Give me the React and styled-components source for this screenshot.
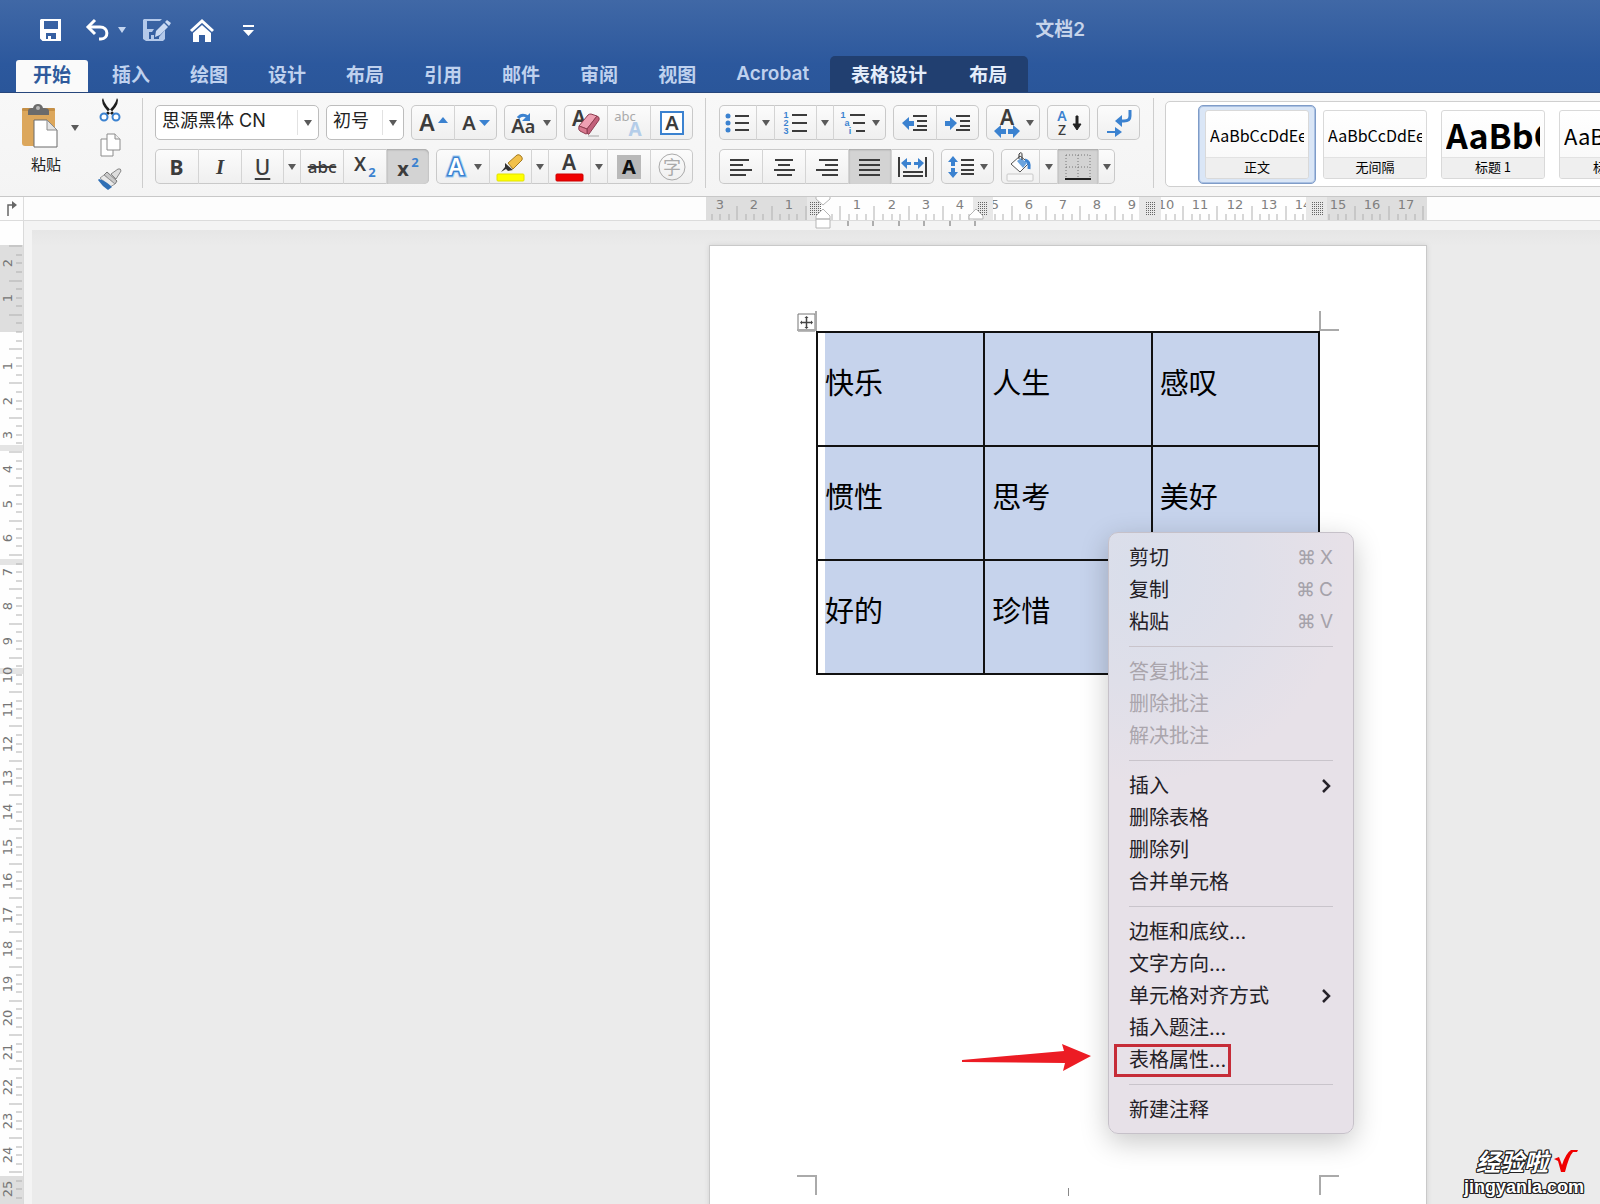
import styled, { createGlobalStyle, css } from "styled-components";

const uiFont = `Inter, "Noto Sans CJK SC", sans-serif`;
const docFont = `"Noto Sans CJK SC", "Noto Sans", sans-serif`;

const blue = "#3b82d0";
const ink = "#3c3c3c";

const tabs = ["插入", "绘图", "设计", "布局", "引用", "邮件", "审阅", "视图", "Acrobat"];

const cells = [
  ["快乐", "人生", "感叹"],
  ["惯性", "思考", "美好"],
  ["好的", "珍惜", ""],
];

const menuGroups = [
  [
    { label: "剪切", keys: "X" },
    { label: "复制", keys: "C" },
    { label: "粘贴", keys: "V" },
  ],
  [
    { label: "答复批注", disabled: true },
    { label: "删除批注", disabled: true },
    { label: "解决批注", disabled: true },
  ],
  [
    { label: "插入", sub: true },
    { label: "删除表格" },
    { label: "删除列" },
    { label: "合并单元格" },
  ],
  [
    { label: "边框和底纹..." },
    { label: "文字方向..." },
    { label: "单元格对齐方式", sub: true },
    { label: "插入题注..." },
    { label: "表格属性...", marked: true },
  ],
  [{ label: "新建注释" }],
];

/* icons */

const Caret = ({ color = "#5a5a5a" }) => (
  <svg width="8" height="6" viewBox="0 0 8 6">
    <path d="M0 0h8L4 6z" fill={color} />
  </svg>
);

const SaveIcon = () => (
  <svg width="22" height="22" viewBox="0 0 22 22">
    <path
      fill="#fff"
      fillRule="evenodd"
      d="M1 0h20v22H2.500L0 19.500V1zM4 2v8h14V2zM6 14v6h2v-3h3v3h5v-6z"
    />
  </svg>
);

const UndoIcon = () => (
  <svg width="23" height="22" viewBox="0 0 23 22" fill="none" stroke="#fff" strokeWidth="3">
    <path d="M9 1L2 8l7 7" />
    <path d="M2 8h12c9 0 9 12 1 12h-2" />
  </svg>
);

const SaveEditIcon = () => (
  <svg width="28" height="22" viewBox="0 0 28 22">
    <path
      fill="#b4c9ea"
      fillRule="evenodd"
      d="M1 0h18l-2 2H4v8h7l-2 3H6v7h2v-4h3v4h5v-2l6-7v9l-2 2H3l-3-2V1z"
    />
    <path fill="#c9d9f2" d="M13 12L21 4l4 4-8 8-5 2zM22 3l2-2 4 3-2 3z" />
  </svg>
);

const HomeIcon = () => (
  <svg width="24" height="23" viewBox="0 0 24 23">
    <path d="M1 12L12 2l11 10" fill="none" stroke="#fff" strokeWidth="3" />
    <path d="M3 14l9-8 9 8v9h-6v-7H9v7H3z" fill="#fff" />
  </svg>
);

const CustomizeIcon = () => (
  <svg width="11" height="11" viewBox="0 0 11 11" fill="#fff">
    <path d="M0 0h11v2H0zM0 5h11l-5.500 6z" />
  </svg>
);

const PasteIcon = () => (
  <svg width="36" height="45" viewBox="0 0 36 45">
    <rect x="0" y="5" width="33" height="38" rx="3" fill="#dca75c" />
    <rect x="0" y="5" width="33" height="3" rx="1" fill="#c58f45" />
    <path d="M6 12V8q0-3 4-3h1q1-4 5-4t5 4h1q5 0 5 3v4z" fill="#6b6b6b" />
    <circle cx="16" cy="5" r="2" fill="#b9b9b9" />
    <path d="M12 17h13l10 10v17H12z" fill="#fff" stroke="#6a6a6a" />
    <path d="M25 17v10h10z" fill="#e4e4e4" stroke="#8a8a8a" />
  </svg>
);

const CutIcon = () => (
  <svg width="22" height="24" viewBox="0 0 22 24">
    <path d="M4 0q2 8 11 15l-2 2Q3 9 3 2zM18 0q-2 8-11 15l2 2Q19 9 19 2z" fill="#1d1d1d" />
    <circle cx="5" cy="19" r="3.500" fill="#fff" stroke={blue} strokeWidth="2" />
    <circle cx="17" cy="19" r="3.500" fill="#fff" stroke={blue} strokeWidth="2" />
  </svg>
);

const CopyIcon = () => (
  <svg width="21" height="24" viewBox="0 0 21 24" fill="#fff" stroke="#8c8c8c">
    <path d="M1 6h8l4 4v13H1z" />
    <path d="M7 1h8l5 5v11H7z" />
    <path d="M15 1v5h5" fill="#eee" />
  </svg>
);

const BrushIcon = () => (
  <svg width="24" height="22" viewBox="0 0 24 22">
    <path d="M13 6l7-5q3-1 3 2l-5 8z" fill="#ddd" stroke="#888" />
    <path d="M9 4l10 9-2 3L6 7z" fill="#c9c9c9" stroke="#777" />
    <path d="M6 7l11 9-5 3L2 10z" fill="#e9e9e9" stroke="#999" />
    <path d="M1 11q7 2 13 8l-4 3Q4 18 0 12z" fill="#2f6fb5" />
  </svg>
);

/* a letter used as the drawing of a tool */
const T = ({ x, y, s = 22, fill = ink, w = 500, children, ...rest }) => (
  <text x={x} y={y} fontSize={s} fill={fill} fontWeight={w} textAnchor="middle" fontFamily="Noto Sans, sans-serif" {...rest}>
    {children}
  </text>
);

/* small list numbers */
const N = ({ x, y, children }) => (
  <text x={x} y={y} fontSize="9" fill={blue} fontWeight="700" textAnchor="middle" fontFamily="Liberation Sans, sans-serif">
    {children}
  </text>
);

const Draw = ({ w = 30, h = 30, children }) => (
  <svg width={w} height={h} viewBox={`0 0 ${w} ${h}`}>
    {children}
  </svg>
);

const GrowIcon = () => (
  <Draw w={34}>
    <T x={11} y={23} s={23} w={600}>A</T>
    <path d="M22 15l5-6 5 6z" fill={blue} />
  </Draw>
);
const ShrinkIcon = () => (
  <Draw w={34}>
    <T x={10} y={22} s={20} w={600}>A</T>
    <path d="M20 12h11l-5.500 6z" fill={blue} />
  </Draw>
);
const CaseIcon = () => (
  <Draw w={28}>
    <T x={8} y={25} s={20} w={600}>A</T>
    <T x={20} y={25} s={18} w={600}>a</T>
    <path d="M8 10q4-5 10-1" fill="none" stroke={blue} strokeWidth="3" />
    <path d="M20 5v8h-8z" fill={blue} />
  </Draw>
);
const EraserIcon = () => (
  <Draw w={32}>
    <T x={9} y={18} s={21} w={600}>A</T>
    <path d="M18 28h11" stroke="#ccc" strokeWidth="2" />
    <path d="M9 18L18 7q1-1 3-1l6 2-10 13z" fill="#eea0b2" stroke="#8e3d50" />
    <path d="M27 8q3 1 2 4L19 26q-1 1-2-1v-4z" fill="#c2607a" stroke="#8e3d50" />
    <path d="M9 18l8 3v4q0 1-1 1l-6-3q-2-1-1-5z" fill="#d9798f" stroke="#8e3d50" />
  </Draw>
);
const PhoneticIcon = () => (
  <Draw w={32}>
    <T x={12} y={13} s={13} w={400} fill="#aaa">abc</T>
    <T x={22} y={28} s={19} w={700} fill="#b4cde9">A</T>
  </Draw>
);
const BoxedAIcon = () => (
  <Draw w={24} h={24}>
    <rect x="1" y="1" width="22" height="22" fill="#fff" stroke={blue} strokeWidth="2" />
    <T x={12} y={19} s={20} w={600}>A</T>
  </Draw>
);
const SubIcon = () => (
  <Draw w={26}>
    <T x={8} y={19} s={19} w={600}>X</T>
    <T x={20} y={25} s={13} w={700} fill={blue}>2</T>
  </Draw>
);
const SupIcon = () => (
  <Draw w={26}>
    <T x={8} y={24} s={20} w={700}>x</T>
    <T x={20} y={15} s={13} w={700} fill={blue}>2</T>
  </Draw>
);
const GlowAIcon = () => (
  <Draw w={26}>
    <T x={13} y={23} s={23} w={600} fill="#fff" stroke="#a9d0f3" strokeWidth="5" paintOrder="stroke">A</T>
    <T x={13} y={23} s={23} w={600} fill="#fff" stroke={blue} strokeWidth="3" paintOrder="stroke">A</T>
  </Draw>
);
const MarkerIcon = () => (
  <Draw>
    <path d="M12 11l9-8q2-1 4 1t1 4l-9 9z" fill="#f2c14b" stroke="#a57b20" />
    <path d="M9 11l8 7-5 1-2-2-5 3 4-5z" fill="#333" />
    <rect x="1" y="22" width="27" height="7" rx="1" fill="#ff0" stroke="#e2e200" />
  </Draw>
);
const FontColorIcon = () => (
  <Draw>
    <T x={14} y={18} s={21} w={600}>A</T>
    <rect x="1" y="22" width="27" height="7" rx="1" fill="#f00000" stroke="#c00" />
  </Draw>
);
const ShadedAIcon = () => (
  <Draw w={24} h={24}>
    <path d="M0 0h24v24H0z" fill="#b9b9b9" />
    <T x={12} y={19} s={20} w={700} fill="#111">A</T>
  </Draw>
);
const CircledIcon = () => (
  <Draw w={28} h={28}>
    <circle cx="14" cy="14" r="13" fill="none" stroke="#aaa" />
    <text x="14" y="21" fontSize="18" fill="#aaa" textAnchor="middle" fontFamily="Noto Sans CJK SC, sans-serif">字</text>
  </Draw>
);

const BulletsIcon = () => (
  <Draw w={26} h={22}>
    {[4, 11, 18].map((y) => (
      <g key={y}>
        <circle cx="3" cy={y} r="2.500" fill={blue} />
        <path d={`M10 ${y}h14`} stroke={ink} strokeWidth="2" />
      </g>
    ))}
  </Draw>
);
const NumbersIcon = () => (
  <Draw w={26} h={24}>
    {[4, 12, 20].map((y, i) => (
      <g key={y}>
        <N x={3} y={y + 3}>{i + 1}</N>
        <path d={`M9 ${y}h15`} stroke={ink} strokeWidth="2" />
      </g>
    ))}
  </Draw>
);
const OutlineIcon = () => (
  <Draw w={26} h={24}>
    <N x={2} y={7}>1</N>
    <N x={6} y={15}>a</N>
    <N x={9} y={23}>i</N>
    <path d="M9 4h15M12 12h12M15 20h9" stroke={ink} strokeWidth="2" />
  </Draw>
);
const arrowLeft = "M0 6l7-6v4h5v5H7v4z";
const arrowRight = "M12 6L5 0v4H0v5h5v4z";
const IndentIcon = ({ right }) => (
  <Draw w={26} h={18}>
    <path d={right ? arrowRight : arrowLeft} transform="translate(0 3)" fill={blue} />
    <path d="M11 2h14M15 7h10M15 12h10M11 16h14" stroke={ink} strokeWidth="2" />
  </Draw>
);
const WidthAIcon = () => (
  <Draw w={28}>
    <T x={14} y={17} s={21} w={600}>A</T>
    <path d={arrowLeft} transform="translate(1 17)" fill={blue} />
    <path d={arrowRight} transform="translate(15 17)" fill={blue} />
  </Draw>
);
const SortIcon = () => (
  <Draw w={26}>
    <T x={6} y={13} s={14} w={600} fill={blue}>A</T>
    <T x={6} y={27} s={14} w={500}>Z</T>
    <path d="M20 8h2v8h3l-4 6-4-6h3z" fill="#222" stroke="#222" />
  </Draw>
);
const ReturnIcon = () => (
  <Draw w={26} h={28}>
    <path d="M24 1v6q0 5-6 5h-4" fill="none" stroke={blue} strokeWidth="3" />
    <path d="M16 6v12l-7-6z" fill={blue} />
    <path d="M1 23h9" stroke={blue} strokeWidth="2" />
    <path d="M9 18v10l7-5z" fill={blue} />
  </Draw>
);
const AlignIcon = ({ lines }) => (
  <Draw w={24} h={18}>
    {lines.map(([x, w], i) => (
      <path key={i} d={`M${x} ${2 + i * 5}h${w}`} stroke={ink} strokeWidth="2" />
    ))}
  </Draw>
);
const DistributeIcon = () => (
  <Draw w={30} h={22}>
    <path d="M1 1v20M28 1v20" stroke={ink} strokeWidth="2" />
    <path d="M5 16h20M5 20h20" stroke={ink} strokeWidth="2" />
    <path d="M3 7l6-5v4h4v3H9v4zM26 7l-6-5v4h-4v3h4v4z" fill={blue} />
  </Draw>
);
const SpacingIcon = () => (
  <Draw w={28} h={22}>
    <path d="M6 0l5 6H8v4H4V6H1zM6 22l5-6H8v-4H4v4H1z" fill={blue} />
    <path d="M14 4h13M14 9h13M14 14h13M14 18h13" stroke={ink} strokeWidth="2" />
  </Draw>
);
const BucketIcon = () => (
  <Draw w={28}>
    <path d="M5 12l9-8 9 7-9 9z" fill="#fff" stroke="#555" />
    <path d="M11 9l4-3 6 5-4 5z" fill="#6ba3dd" />
    <path d="M13 7V2q3-3 3 1v5" fill="none" stroke="#333" />
    <path d="M19 8q5 1 4 9" fill="none" stroke={blue} strokeWidth="3" />
    <rect x="1" y="22" width="26" height="7" rx="1" fill="#f7f7f7" stroke="#c8c8c8" />
  </Draw>
);
const BordersIcon = () => (
  <Draw w={26} h={26}>
    <path d="M1 1h24v24M1 1v24M13 1v24M1 13h24" fill="none" stroke="#777" strokeDasharray="1 2" />
    <path d="M0 25h26" stroke="#222" strokeWidth="2" />
  </Draw>
);
const TabStopIcon = () => (
  <svg width="10" height="15" viewBox="0 0 10 15">
    <path d="M1 15V4h5" fill="none" stroke="#666" strokeWidth="1.500" />
    <path d="M5 0l5 4-5 4z" fill="#666" />
  </svg>
);
const SubmenuIcon = () => (
  <svg width="11" height="14" viewBox="0 0 11 14">
    <path d="M1 1l6 6-6 6" fill="none" stroke="#26222a" strokeWidth="2.500" />
  </svg>
);
const MoveHandleIcon = () => (
  <svg width="19" height="19" viewBox="0 0 19 19">
    <path d="M1 1h17v17H1z" fill="#fff" stroke="#777" />
    <path d="M4 9.500h11M9.500 4v11" stroke="#444" strokeWidth="1.500" />
    <path d="M9.500 3l2 2h-4zM9.500 16l2-2h-4zM3 9.500l2-2v4zM16 9.500l-2-2v4z" fill="#444" />
  </svg>
);

/* rulers: CM is the width of one centimetre on screen */

const CM = 34.3;

function makeTicks(from, to, zero) {
  const ticks = [];
  const first = Math.ceil(((from - zero) / CM) * 4);
  const last = Math.floor(((to - zero) / CM) * 4);
  for (let q = first; q <= last; q++) {
    ticks.push({ pos: Math.round(zero + (q * CM) / 4), long: Math.abs(q % 4) === 2 });
  }
  return ticks;
}

const DotGrid = ({ x }) => (
  <path
    d={[0, 2, 4, 6, 8, 10, 12].map((y) => `M${x} ${5 + y}h11v1h-11z`).join("")}
    fill="url(#dots)"
  />
);

const HorizontalRuler = () => (
  <RulerSvg width="722" height="33" viewBox="0 0 722 33">
    <defs>
      <pattern id="dots" width="2" height="2" patternUnits="userSpaceOnUse">
        <path d="M0 0h1v2H0z" fill="#666" />
      </pattern>
    </defs>
    <path d="M0 0h721v23H0z" fill="#fefefe" />
    <path d="M0 0h101v23H0zM621 0h100v23H621z" fill="#dedede" />
    {makeTicks(4, 720, 117).map((t) => (
      <path key={t.pos} d={`M${t.pos} ${t.long ? 9 : 17}V23`} stroke="#b0b0b0" />
    ))}
    {Array.from({ length: 21 }, (_, i) => i - 3).map((n) =>
      n === 0 ? null : (
        <text key={n} x={Math.round(117 + n * CM)} y="12" fontSize="13" textAnchor="middle" fill="#808080">
          {Math.abs(n)}
        </text>
      )
    )}
    <path d="M101 0h13v23h-13zM267 0h20v23h-20zM433 0h22v23h-22zM600 0h21v23h-21z" fill="#e8e8e8" />
    <DotGrid x={104} />
    <DotGrid x={271} />
    <DotGrid x={439} />
    <DotGrid x={606} />
    <path
      d="M110 0v2l7 6 7-6V0M110 22v-3l7-7 7 7v3zM110 22h14v9h-14zM263 22v-3l7-7 7 7v3z"
      fill="#fff"
      stroke="#b5b5b5"
    />
    {[142, 167, 193, 218, 244, 269].map((x) => (
      <path key={x} d={`M${x} 24v5`} stroke="#666" />
    ))}
  </RulerSvg>
);

const VerticalRuler = () => (
  <RulerSvg width="23" height="1000" viewBox="0 0 23 1000">
    <path d="M0 24h23v87H0zM0 955h23v45H0z" fill="#dedede" />
    <path d="M0 224h23v6H0zM0 338h23v6H0zM0 447h23v6H0z" fill="#e4e4e4" />
    {makeTicks(24, 1000, 111).map((t) => (
      <path key={t.pos} d={`M${t.long ? 9 : 16} ${t.pos}H22`} stroke="#b0b0b0" />
    ))}
    {Array.from({ length: 28 }, (_, i) => i - 2).map((n) =>
      n === 0 ? null : (
        <text
          key={n}
          transform={`translate(12 ${Math.round(111 + n * CM)}) rotate(-90)`}
          fontSize="13"
          textAnchor="middle"
          fill="#757575"
        >
          {Math.abs(n)}
        </text>
      )
    )}
  </RulerSvg>
);

const Split = ({ label, w, caret, active, children }) => (
  <>
    <Tool $w={w} $active={active} aria-label={label}>{children}</Tool>
    <Tool $w={caret} $soft aria-label={label + "选项"}><Caret /></Tool>
  </>
);

const App = () => {
  return (
    <Window>
      <GlobalStyle />
      <Header>
        <QuickBar>
          <QuickButton $w={50} aria-label="保存"><SaveIcon /></QuickButton>
          <QuickButton $w={42} aria-label="撤消"><UndoIcon /></QuickButton>
          <QuickButton $w={8} aria-label="撤消选项"><Caret color="#c4d5f0" /></QuickButton>
          <QuickButton $w={61} aria-label="另存为"><SaveEditIcon /></QuickButton>
          <QuickButton $w={30} aria-label="主页"><HomeIcon /></QuickButton>
          <QuickButton $w={63} aria-label="自定义"><CustomizeIcon /></QuickButton>
          <Spacer $grow={22} />
          <Title>文档2</Title>
          <Spacer $grow={15} />
        </QuickBar>
        <TabBar>
          <ActiveTab>开始</ActiveTab>
          {tabs.map((tab) => (
            <Tab key={tab}>{tab}</Tab>
          ))}
          <ContextTabs>
            <ContextTab>表格设计</ContextTab>
            <ContextTab>布局</ContextTab>
          </ContextTabs>
        </TabBar>
      </Header>

      <Ribbon>
        <Clipboard>
          <PasteButton>
            <PasteIcon />
            <PasteLabel>粘贴</PasteLabel>
          </PasteButton>
          <PasteMore aria-label="粘贴选项"><Caret /></PasteMore>
          <ClipTools>
            <PlainButton aria-label="剪切"><CutIcon /></PlainButton>
            <PlainButton aria-label="复制"><CopyIcon /></PlainButton>
            <PlainButton aria-label="格式刷"><BrushIcon /></PlainButton>
          </ClipTools>
        </Clipboard>
        <Divider />
        <Section>
          <Row>
            <Combo $w={164}>
              <select aria-label="字体"><option>思源黑体 CN</option></select>
              <ComboArrow><Caret /></ComboArrow>
            </Combo>
            <Combo $w={78}>
              <select aria-label="字号"><option>初号</option></select>
              <ComboArrow><Caret /></ComboArrow>
            </Combo>
            <Group>
              <Tool aria-label="增大字号"><GrowIcon /></Tool>
              <Tool aria-label="减小字号"><ShrinkIcon /></Tool>
            </Group>
            <Group>
              <Tool $w={53} aria-label="更改大小写"><CaseIcon /><Caret /></Tool>
            </Group>
            <Group>
              <Tool aria-label="清除格式"><EraserIcon /></Tool>
              <Tool aria-label="拼音指南"><PhoneticIcon /></Tool>
              <Tool aria-label="字符边框"><BoxedAIcon /></Tool>
            </Group>
          </Row>
          <Row>
            <Group>
              <Tool><Letter $weight={700}>B</Letter></Tool>
              <Tool><Letter $weight={600} $italic>I</Letter></Tool>
              <Split label="下划线" w={42} caret={17}><Letter $weight={500} $line="underline">U</Letter></Split>
              <Tool><Letter $weight={500} $small $line="line-through">abc</Letter></Tool>
              <Tool aria-label="下标"><SubIcon /></Tool>
              <Tool $active $last aria-label="上标"><SupIcon /></Tool>
            </Group>
            <Group>
              <Tool $w={53} aria-label="文本效果"><GlowAIcon /><Caret /></Tool>
              <Split label="突出显示" w={42} caret={17}><MarkerIcon /></Split>
              <Split label="字体颜色" w={42} caret={17}><FontColorIcon /></Split>
              <Tool aria-label="字符底纹"><ShadedAIcon /></Tool>
              <Tool aria-label="带圈字符"><CircledIcon /></Tool>
            </Group>
          </Row>
        </Section>
        <Divider />
        <Section $wide>
          <Row>
            <Group>
              <Split label="项目符号" w={37} caret={18}><BulletsIcon /></Split>
              <Split label="编号" w={42} caret={17}><NumbersIcon /></Split>
              <Tool $w={53} aria-label="多级列表"><OutlineIcon /><Caret /></Tool>
            </Group>
            <Group>
              <Tool aria-label="减少缩进量"><IndentIcon /></Tool>
              <Tool aria-label="增加缩进量"><IndentIcon right /></Tool>
            </Group>
            <Group>
              <Tool $w={54} aria-label="中文版式"><WidthAIcon /><Caret /></Tool>
            </Group>
            <Group>
              <Tool aria-label="排序"><SortIcon /></Tool>
            </Group>
            <Group>
              <Tool aria-label="显示编辑标记"><ReturnIcon /></Tool>
            </Group>
          </Row>
          <Row>
            <Group>
              <Tool aria-label="左对齐"><AlignIcon lines={[[1, 19], [1, 13], [1, 22], [1, 16]]} /></Tool>
              <Tool aria-label="居中"><AlignIcon lines={[[3, 18], [6, 12], [2, 21], [5, 15]]} /></Tool>
              <Tool aria-label="右对齐"><AlignIcon lines={[[4, 19], [10, 13], [1, 22], [7, 16]]} /></Tool>
              <Tool $active aria-label="两端对齐"><AlignIcon lines={[[1, 21], [1, 21], [1, 21], [1, 21]]} /></Tool>
              <Tool aria-label="分散对齐"><DistributeIcon /></Tool>
            </Group>
            <Group>
              <Tool $w={53} aria-label="行距"><SpacingIcon /><Caret /></Tool>
            </Group>
            <Group>
              <Split label="底纹" w={38} caret={18}><BucketIcon /></Split>
              <Split label="边框" w={41} caret={17} active><BordersIcon /></Split>
            </Group>
          </Row>
        </Section>
        <Divider />
        <StyleGallery>
          <StyleItem $selected>
            <StyleCard><Preview>AaBbCcDdEe</Preview><StyleName>正文</StyleName></StyleCard>
          </StyleItem>
          <StyleItem>
            <StyleCard><Preview>AaBbCcDdEe</Preview><StyleName>无间隔</StyleName></StyleCard>
          </StyleItem>
          <StyleItem>
            <StyleCard><Preview $size={34} $bold>AaBbCc</Preview><StyleName>标题 1</StyleName></StyleCard>
          </StyleItem>
          <StyleItem>
            <StyleCard><Preview $size={22}>AaBbCcDd</Preview><StyleName>标题 2</StyleName></StyleCard>
          </StyleItem>
        </StyleGallery>
      </Ribbon>

      <RulerRow>
        <RulerCorner aria-label="制表位"><TabStopIcon /></RulerCorner>
        <RulerTrack><HorizontalRuler /></RulerTrack>
      </RulerRow>

      <Workspace>
        <SideRuler><VerticalRuler /></SideRuler>
        <Canvas>
          <Page>
            <MoveHandle><MoveHandleIcon /></MoveHandle>
            <CropMark $v="top" $h="left" />
            <CropMark $v="top" $h="right" />
            <CropMark $v="bottom" $h="left" />
            <CropMark $v="bottom" $h="right" />
            <FootTick />
            <DocTable>
              <tbody>
                {cells.map((row, i) => (
                  <tr key={i}>
                    {row.map((text, j) => (
                      <td key={j}>{text}</td>
                    ))}
                  </tr>
                ))}
              </tbody>
            </DocTable>
            <Menu>
              {menuGroups.map((group, i) => (
                <MenuGroup key={i}>
                  {group.map((item) => (
                    <li key={item.label}>
                      <MenuItem disabled={item.disabled}>
                        <MenuLabel $marked={item.marked}>{item.label}</MenuLabel>
                        {item.keys && <Keys><span>⌘</span>{item.keys}</Keys>}
                        {item.sub && <SubmenuIcon />}
                      </MenuItem>
                    </li>
                  ))}
                </MenuGroup>
              ))}
            </Menu>
            <Pointer width="130" height="30" viewBox="0 0 130 30">
              <path d="M0 17L102 8 100 1l29 12-28 15 2-8L0 19z" fill="#ec1c24" />
            </Pointer>
          </Page>
        </Canvas>
      </Workspace>

      <Watermark>
        <WatermarkTop>
          经验啦
          <Check width="24" height="24" viewBox="0 0 24 24">
            <path d="M0 10l5-2 3 8Q12 4 17 1h7l-1 2h-4Q15 7 11 23H7L4 12z" fill="#f00000" />
          </Check>
        </WatermarkTop>
        <span>jingyanla.com</span>
      </Watermark>
    </Window>
  );
};

export default App;

const GlobalStyle = createGlobalStyle`
  * {
    box-sizing: border-box;
  }
  body {
    margin: 0;
    font-family: ${uiFont};
  }
  button, select {
    font-family: inherit;
    border: 0;
    padding: 0;
    margin: 0;
    background: none;
    color: inherit;
  }
  svg {
    display: block;
    flex: none;
    overflow: visible;
  }
`;

const Window = styled.div`
  position: relative;
  display: flex;
  flex-direction: column;
  height: 100vh;
  overflow: hidden;
  background: #f4f4f4;
`;

const Header = styled.header`
  background: linear-gradient(#4068a6, #2c589d 70%, #2a569a);
  border-bottom: 1px solid #27477c;
`;

const QuickBar = styled.div`
  display: flex;
  align-items: center;
  height: 56px;
  padding: 4px 0 0 26px;
`;

const QuickButton = styled.button`
  display: flex;
  justify-content: center;
  width: ${(p) => p.$w}px;
`;

const Spacer = styled.div`
  flex: ${(p) => p.$grow};
`;

const Title = styled.h1`
  margin: 0;
  font-size: 19px;
  line-height: 24px;
  font-weight: 600;
  color: #c6d4ea;
`;

const TabBar = styled.nav`
  display: flex;
  align-items: flex-end;
  height: 36px;
  padding-left: 16px;
`;

const Tab = styled.button`
  height: 36px;
  padding: 0 20px 2px;
  font-size: 19px;
  font-weight: 600;
  color: #bfd1ee;
`;

const ActiveTab = styled(Tab)`
  height: 32px;
  padding: 0 17px 5px;
  margin-right: 4px;
  border-radius: 3px 3px 0 0;
  background: #fafafa;
  color: #2f5a9c;
`;

const ContextTabs = styled.div`
  display: flex;
  margin-left: 1px;
  border-radius: 5px 5px 0 0;
  background: #213f70;
`;

const ContextTab = styled(Tab)`
  padding: 0 21px 2px;
  color: #e4edfb;
  font-weight: 700;
`;

const Ribbon = styled.section`
  display: flex;
  height: 104px;
  flex: none;
  background: linear-gradient(#f8f8f8, #f4f4f4);
  border-bottom: 1px solid #c8c8c8;
`;

const Clipboard = styled.div`
  display: flex;
  align-items: flex-start;
  width: 142px;
  padding: 5px 0 0 22px;
`;

const PasteButton = styled.button`
  display: flex;
  flex-direction: column;
  align-items: flex-start;
  gap: 6px;
  padding: 5px 0 0;
`;

const PasteLabel = styled.span`
  width: 48px;
  font-size: 15px;
  line-height: 22px;
  color: #222;
`;

const PasteMore = styled.button`
  margin: 27px 19px 0 1px;
`;

const ClipTools = styled.div`
  display: flex;
  flex-direction: column;
  align-items: center;
  gap: 11px;
`;

const PlainButton = styled.button`
  display: block;
`;

const Divider = styled.div`
  width: 1px;
  margin: 5px 0 8px;
  background: #cdcdcd;
`;

const Section = styled.div`
  display: flex;
  flex-direction: column;
  gap: 9px;
  padding: 12px ${(p) => (p.$wide ? 13 : 12)}px 0 ${(p) => (p.$wide ? 13 : 12)}px;
`;

const Row = styled.div`
  display: flex;
  gap: 7px;
  height: 35px;
`;

const Group = styled.div`
  display: flex;
  border-radius: 5px;
  background: linear-gradient(#fcfcfc, #efefef);
  box-shadow: inset 0 0 0 1px #c9c9c9;
`;

const Tool = styled.button`
  display: flex;
  align-items: center;
  justify-content: center;
  gap: 5px;
  width: ${(p) => p.$w || 43}px;
  height: 35px;
  color: ${ink};
  & + & {
    border-left: 1px solid ${(p) => (p.$soft ? "#e3e3e3" : "#d4d4d4")};
  }
  ${(p) =>
    p.$active &&
    css`
      background: #d3d3d3;
      border-radius: ${p.$last ? "0 5px 5px 0" : "0"};
      box-shadow: inset 0 1px 2px #a5a5a5;
    `}
`;

const Letter = styled.span`
  font-family: ${(p) => (p.$italic ? `"Liberation Serif", serif` : `"Noto Sans", sans-serif`)};
  font-size: ${(p) => (p.$small ? 17 : 21)}px;
  line-height: 28px;
  font-weight: ${(p) => p.$weight};
  font-style: ${(p) => (p.$italic ? "italic" : "normal")};
  text-decoration: ${(p) => p.$line || "none"};
  text-decoration-thickness: 2px;
  text-underline-offset: 3px;
`;

const Combo = styled.div`
  position: relative;
  width: ${(p) => p.$w}px;
  border: 1px solid #bdbdbd;
  border-radius: 5px;
  background: #fff;
  select {
    appearance: none;
    width: 100%;
    height: 100%;
    padding: 0 22px 4px 6px;
    font-size: 18px;
    color: #222;
  }
`;

const ComboArrow = styled.span`
  position: absolute;
  top: 4px;
  bottom: 4px;
  right: 0;
  display: flex;
  align-items: center;
  justify-content: center;
  width: 21px;
  border-left: 1px solid #e2e2e2;
  pointer-events: none;
`;

const StyleGallery = styled.div`
  display: flex;
  flex: 1;
  min-width: 0;
  height: 86px;
  margin: 8px -8px 0 11px;
  padding: 3px 0 0 32px;
  overflow: hidden;
  border: 1px solid #cfcfcf;
  border-radius: 5px;
  background: #fff;
`;

const StyleItem = styled.button`
  flex: none;
  width: 118px;
  height: 79px;
  padding: 4px 6px;
  border: 1px solid transparent;
  border-radius: 5px;
  ${(p) =>
    p.$selected &&
    css`
      border-color: #7f9cc8;
      background: #dae6f6;
      box-shadow: inset 0 0 0 1px #a9c0e2;
    `}
`;

const StyleCard = styled.span`
  display: flex;
  flex-direction: column;
  height: 69px;
  overflow: hidden;
  border: 1px solid #d9d9d9;
  border-radius: 3px;
  background: linear-gradient(#fff, #f7f7f7);
  font-family: ${docFont};
  color: #000;
`;

const Preview = styled.span`
  height: 46px;
  margin: 0 4px;
  overflow: hidden;
  text-align: left;
  font-size: ${(p) => p.$size || 16}px;
  font-weight: ${(p) => (p.$bold ? 700 : 400)};
  line-height: 48px;
  white-space: nowrap;
`;

const StyleName = styled.span`
  flex: 1;
  border-top: 1px solid #e2e2e2;
  background: #efefef;
  font-size: 13px;
  line-height: 18px;
`;

const RulerRow = styled.div`
  position: relative;
  display: flex;
  flex: none;
  height: 24px;
  background: #fdfdfd;
  border-bottom: 1px solid #dcdcdc;
`;

const RulerCorner = styled.button`
  display: flex;
  justify-content: center;
  width: 23px;
  padding-top: 4px;
`;

const RulerTrack = styled.div`
  flex: 1;
  min-width: 0;
  padding-left: 682px;
  border-left: 1px solid #dcdcdc;
`;

const RulerSvg = styled.svg`
  font-family: "DejaVu Sans", sans-serif;
`;

const Workspace = styled.main`
  display: flex;
  flex: 1;
  min-height: 0;
`;

const SideRuler = styled.div`
  width: 24px;
  flex: none;
  overflow: hidden;
  background: #fefefe;
  border-right: 1px solid #dadada;
`;

const Canvas = styled.div`
  flex: 1;
  min-width: 0;
  margin: 9px 0 0 8px;
  padding: 15px 0 0 677px;
  overflow: hidden;
  background: linear-gradient(#e6e6e6, #ebebeb 16px);
`;

/* A4 sheet with its margins */
const Page = styled.article`
  position: relative;
  width: 718px;
  height: 1015px;
  padding: 85px 106px;
  border: 1px solid #c9c9c9;
  background: #fff;
  box-shadow: 0 0 5px #d2d2d2;
`;

const MoveHandle = styled.span`
  position: absolute;
  left: 87px;
  top: 67px;
`;

const CropMark = styled.span`
  position: absolute;
  width: 20px;
  height: 20px;
  ${(p) => p.$v}: ${(p) => (p.$v === "top" ? 65 : 64)}px;
  ${(p) => p.$h}: 87px;
  border: 0 solid #aaa;
  border-${(p) => (p.$v === "top" ? "bottom" : "top")}-width: 2px;
  border-${(p) => (p.$h === "left" ? "right" : "left")}-width: 2px;
`;

const FootTick = styled.span`
  position: absolute;
  left: 358px;
  bottom: 63px;
  width: 1px;
  height: 8px;
  background: #888;
`;

const DocTable = styled.table`
  width: 100%;
  table-layout: fixed;
  border-collapse: collapse;
  font-family: ${docFont};
  td {
    height: 114px;
    padding: 0 7px 16px;
    border: 2px solid #111;
    background: #c6d3ec;
    font-size: 29px;
    line-height: 40px;
    color: #000;
  }
  td:first-child {
    background: linear-gradient(90deg, #fff 7px, #c6d3ec 7px);
  }
`;

const Menu = styled.div`
  position: absolute;
  left: 398px;
  top: 286px;
  width: 246px;
  padding: 9px 20px 7px;
  border: 1px solid #c6c1c9;
  border-radius: 10px;
  background: radial-gradient(circle at 30px 40px, #d9deeb, #dfdfe9 110px, #e7e1e8 210px);
  box-shadow: 0 8px 28px rgba(0, 0, 0, 0.22);
`;

const MenuGroup = styled.ul`
  margin: 0;
  padding: 0;
  list-style: none;
  & + & {
    margin-top: 8px;
    padding-top: 9px;
    border-top: 1px solid #c9c4cb;
  }
`;

const MenuItem = styled.button`
  display: flex;
  align-items: center;
  justify-content: space-between;
  width: 100%;
  height: 32px;
  font-size: 20px;
  line-height: 28px;
  color: #232026;
  &:disabled {
    color: #aaa5ac;
  }
`;

const MenuLabel = styled.span`
  white-space: nowrap;
  ${(p) =>
    p.$marked &&
    css`
      margin-left: -15px;
      padding: 0 2px 0 12px;
      border: 3px solid #c62c38;
      line-height: 27px;
    `}
`;

const Keys = styled.span`
  display: flex;
  align-items: center;
  gap: 4px;
  font-size: 19px;
  color: #a5a2aa;
`;

const Pointer = styled.svg`
  position: absolute;
  left: 252px;
  top: 797px;
`;

const Watermark = styled.footer`
  position: absolute;
  right: 16px;
  bottom: 7px;
  display: flex;
  flex-direction: column;
  align-items: flex-end;
  font-family: "Liberation Sans", "Noto Sans CJK SC", sans-serif;
  font-size: 18px;
  font-weight: 700;
  line-height: 20px;
  color: #fff;
  text-shadow: 1px 0 #222, -1px 0 #222, 0 1px #222, 0 -1px #222, 1px 1px #222, -1px -1px #222, 1px -1px #222,
    -1px 1px #222;
`;

const WatermarkTop = styled.span`
  display: flex;
  align-items: center;
  gap: 6px;
  padding-right: 6px;
  font-size: 24px;
  font-style: italic;
  line-height: 26px;
`;

const Check = styled.svg`
  margin-bottom: 4px;
`;
